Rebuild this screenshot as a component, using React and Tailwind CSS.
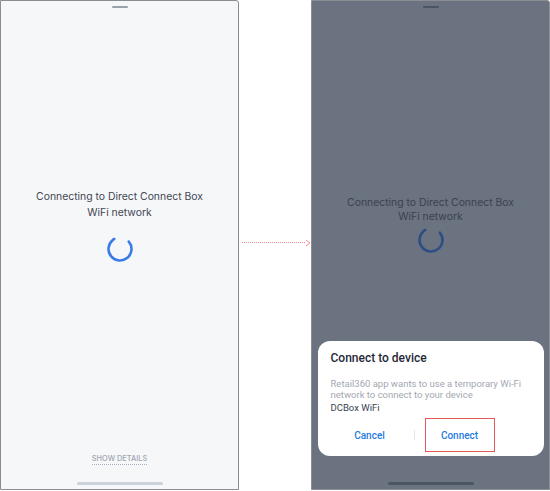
import React from 'react';

function Spinner({ color }) {
  return (
    <svg width="28" height="28" viewBox="0 0 28 28">
      <circle
        cx="14"
        cy="14"
        r="11.5"
        fill="none"
        stroke={color}
        strokeWidth="2.6"
        strokeLinecap="round"
        strokeDasharray="56 16.3"
        transform="rotate(-40 14 14)"
      />
    </svg>
  );
}

function Phone({ dim, children }) {
  return (
    <div
      className={`relative flex h-[490px] w-[239px] flex-col items-center overflow-hidden rounded-tr-[3px] border border-[#8a8d92] ${
        dim ? 'bg-[#6b7280]' : 'bg-[#f6f7f9]'
      }`}
    >
      {children}
    </div>
  );
}

export default function App() {
  return (
    <main
      className="flex h-[491px] w-[550px] items-start bg-white"
      style={{ fontFamily: 'Inter, "Noto Sans", sans-serif' }}
    >
      <Phone>
        <div className="mt-[5px] h-[2px] w-[16px] rounded bg-[#9ca3af]" />
        <p className="mt-[181px] text-center text-[10.4px] leading-[16px] text-[#3f4652]">
          Connecting to Direct Connect Box
          <br />
          WiFi network
        </p>
        <div className="mt-[14px]">
          <Spinner color="#3b7be8" />
        </div>
        <div className="flex-1" />
        <span className="border-b border-dotted border-[#a8aebb] text-[7.4px] font-medium leading-[10px] text-[#a0a6b3]">
          SHOW DETAILS
        </span>
        <div className="mb-[4px] mt-[17px] h-[3px] w-[86px] rounded-full bg-[#cdd2dc]" />
      </Phone>

      <div className="relative flex h-[491px] w-[72px] items-center">
        <div className="mt-[-6px] ml-[3px] h-0 w-[64px] border-t border-dotted border-[#f28b8b]" />
        <svg className="mt-[-6px]" width="6" height="8" viewBox="0 0 6 8">
          <path d="M1 1 L5 4 L1 7" fill="none" stroke="#f28b8b" strokeWidth="1" />
        </svg>
      </div>

      <Phone dim>
        <div className="mt-[5px] h-[2px] w-[16px] rounded bg-[#4b5563]" />
        <p className="mt-[188px] text-center text-[10.4px] leading-[14px] text-[#3a4250]">
          Connecting to Direct Connect Box
          <br />
          WiFi network
        </p>
        <div className="mt-[2px]">
          <Spinner color="#2e4f86" />
        </div>
        <div className="flex-1" />
        <div
          className="mb-[26px] w-[226px] rounded-[12px] bg-white px-[13px] pb-[4px] pt-[9px]"
          style={{ fontFamily: 'Roboto, "Noto Sans", sans-serif' }}
        >
          <h2 className="text-[12px] font-medium leading-[16px] text-[#1f2937]">Connect to device</h2>
          <p className="mt-[11.5px] text-[9.5px] leading-[11px] text-[#a3a8b1]">
            Retail360 app wants to use a temporary Wi-Fi network to connect to your device
          </p>
          <p className="mt-[2px] text-[9.5px] leading-[11px] text-[#374151]">DCBox WiFi</p>
          <div className="mt-[5.5px] flex items-center">
            <span className="w-[78px] text-center text-[10px] font-medium text-[#1f7ae0]">Cancel</span>
            <div className="ml-[5px] h-[10px] w-px bg-[#e5e7eb]" />
            <div className="ml-[10px] flex h-[34px] w-[70px] items-center justify-center border-[1.5px] border-[#e05a5a]">
              <span className="text-[10px] font-medium text-[#1f7ae0]">Connect</span>
            </div>
          </div>
        </div>
        <div className="mb-[4px] h-[3px] w-[86px] rounded-full bg-[#4b5563]" />
      </Phone>
    </main>
  );
}
